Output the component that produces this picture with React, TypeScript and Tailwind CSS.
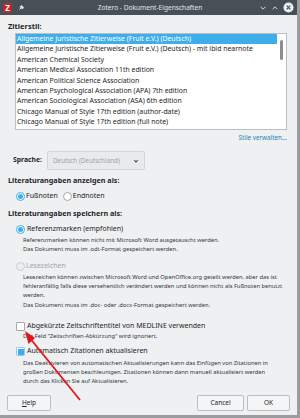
import React from 'react';

const styles = [
  'Allgemeine Juristische Zitierweise (Fruit e.V.) (Deutsch)',
  'Allgemeine Juristische Zitierweise (Fruit e.V.) (Deutsch) - mit ibid nearnote',
  'American Chemical Society',
  'American Medical Association 11th edition',
  'American Political Science Association',
  'American Psychological Association (APA) 7th edition',
  'American Sociological Association (ASA) 6th edition',
  'Chicago Manual of Style 17th edition (author-date)',
  'Chicago Manual of Style 17th edition (full note)',
];

function Radio({ checked, disabled }: { checked?: boolean; disabled?: boolean }) {
  return (
    <span
      className={
        'w-[9px] h-[9px] rounded-full border flex items-center justify-center shrink-0 ' +
        (disabled
          ? 'border-[#c9cbcd] bg-[#eceeef]'
          : checked
          ? 'border-[#3daee9] bg-white'
          : 'border-[#a5a7a9] bg-white')
      }
    >
      {checked && <span className="w-[5px] h-[5px] rounded-full bg-[#3daee9]" />}
    </span>
  );
}

function Checkbox({ checked }: { checked?: boolean }) {
  return (
    <span
      className={
        'w-[9px] h-[9px] rounded-[1px] border shrink-0 flex items-center justify-center ' +
        (checked ? 'border-[#93cdee] bg-white' : 'border-[#a5a7a9] bg-white')
      }
    >
      {checked && <span className="w-[6px] h-[6px] bg-[#3daee9]" />}
    </span>
  );
}

function Desc({ lines, className = '' }: { lines: string[]; className?: string }) {
  return (
    <div className={'pl-[15px] text-[5.75px] text-[#31363b] ' + className}>
      {lines.map((l) => (
        <div key={l} className="h-[9.3px] leading-[9.3px] whitespace-nowrap">
          {l}
        </div>
      ))}
    </div>
  );
}

export default function App() {
  return (
    <div
      className="relative w-[300px] h-[418px] bg-[#eff0f1] flex flex-col overflow-hidden border-r-[3px] border-b-[3px] border-[#9a9c9e]"
      style={{ fontFamily: '"Noto Sans", "DejaVu Sans", sans-serif' }}
    >
      {/* title bar */}
      <div className="h-[15px] bg-[#475057] flex items-center px-[3px] shrink-0 text-[#e3e5e7]">
        <span className="w-[9px] h-[10px] rounded-[2px] bg-[#b8282d] text-white text-[8px] font-bold leading-[10px] text-center">
          Z
        </span>
        <svg width="7" height="7" viewBox="0 0 10 10" className="ml-[6px]">
          <path d="M2 8 L5 5 M4 3 L7 6 M5 2 L8 5 L6 7 L3 4 Z" stroke="#dfe1e3" strokeWidth="1.4" fill="#dfe1e3" />
        </svg>
        <div className="flex-1 text-center text-[6.6px] pr-[4px] pl-[20px]">Zotero - Dokument-Eigenschaften</div>
        <svg width="8" height="8" viewBox="0 0 10 10" className="mr-[4px]">
          <path d="M2 3.5 L5 6.5 L8 3.5" stroke="#dfe1e3" strokeWidth="1.2" fill="none" />
        </svg>
        <svg width="8" height="8" viewBox="0 0 10 10" className="mr-[4px]">
          <path d="M2 6.5 L5 3.5 L8 6.5" stroke="#dfe1e3" strokeWidth="1.2" fill="none" />
        </svg>
        <svg width="11" height="11" viewBox="0 0 12 12">
          <circle cx="6" cy="6" r="5.5" fill="#eff0f1" />
          <path d="M4 4 L8 8 M8 4 L4 8" stroke="#475057" strokeWidth="1.4" />
        </svg>
      </div>

      <div className="flex-1 flex flex-col px-[8px] text-[#232629]">
        <div className="mt-[5px] h-[12px] leading-[12px] text-[7.5px] font-bold">Zitierstil:</div>

        <div className="mt-[1px] ml-[7px] w-[272px] h-[97px] bg-white border border-[#bcbebf] flex">
          <div className="flex-1 flex flex-col text-[6.9px]">
            {styles.map((s, i) => (
              <div
                key={s}
                className={
                  'h-[10.4px] leading-[10.4px] pl-[1px] whitespace-nowrap overflow-hidden ' +
                  (i === 0 ? 'bg-[#3daee9] text-white' : '')
                }
              >
                {s}
              </div>
            ))}
          </div>
          <div className="w-[9px] flex justify-center pt-[6px]">
            <div className="w-[3px] h-[20px] rounded-full bg-[#8b8d8f]" />
          </div>
        </div>

        <div className="mt-[2px] h-[12px] leading-[12px] text-right pr-[2px] text-[6.3px] text-[#2980b9]">
          Stile verwalten...
        </div>

        <div className="mt-[7px] h-[19px] flex items-center">
          <span className="ml-[5px] w-[34px] text-[6.8px] font-bold">Sprache:</span>
          <div className="w-[98px] h-[19px] rounded-[2px] border border-[#d3d5d7] bg-[#e8eaec] flex items-center pl-[5px] pr-[5px] text-[6.3px] text-[#a1a3a5]">
            <span className="flex-1">Deutsch (Deutschland)</span>
            <svg width="6" height="6" viewBox="0 0 10 10">
              <path d="M2 3.5 L5 6.5 L8 3.5" stroke="#4d5257" strokeWidth="1.8" fill="none" />
            </svg>
          </div>
        </div>

        <div className="mt-[4px] h-[12px] leading-[12px] text-[7.2px] font-bold">Literaturangaben anzeigen als:</div>

        <div className="mt-[4px] h-[12px] flex items-center pl-[8px] text-[7px]">
          <Radio checked />
          <span className="ml-[1px]">Fußnoten</span>
          <span className="ml-[5px]">
            <Radio />
          </span>
          <span className="ml-[1px]">Endnoten</span>
        </div>

        <div className="mt-[5px] h-[12px] leading-[12px] text-[7.2px] font-bold">Literaturangaben speichern als:</div>

        <div className="mt-[4px] h-[12px] flex items-center pl-[8px] text-[7px]">
          <Radio checked />
          <span className="ml-[2px]">Referenzmarken (empfohlen)</span>
        </div>
        <Desc
          className="mt-[1px]"
          lines={[
            'Referenzmarken können nicht mit Microsoft Word ausgetauscht werden.',
            'Das Dokument muss im .odt-Format gespeichert werden.',
          ]}
        />

        <div className="mt-[6px] h-[12px] flex items-center pl-[8px] text-[7px] text-[#a1a3a5]">
          <Radio disabled />
          <span className="ml-[1px]">Lesezeichen</span>
        </div>
        <Desc
          lines={[
            'Lesezeichen können zwischen Microsoft Word und OpenOffice.org geteilt werden, aber das ist',
            'fehleranfällig falls diese versehentlich verändert werden und können nicht als Fußnoten benutzt',
            'werden.',
          ]}
        />
        <Desc className="mt-[0.5px]" lines={['Das Dokument muss im .doc- oder .docx-Format gespeichert werden.']} />

        <div className="mt-[10px] h-[12px] flex items-center pl-[8px] text-[7px]">
          <Checkbox />
          <span className="ml-[2px]">Abgekürzte Zeitschriftentitel von MEDLINE verwenden</span>
        </div>
        <Desc lines={['Das Feld "Zeitschriften-Abkürzung" wird ignoriert.']} />

        <div className="mt-[4px] h-[12px] flex items-center pl-[8px] text-[7px]">
          <Checkbox checked />
          <span className="ml-[2px]">Automatisch Zitationen aktualisieren</span>
        </div>
        <Desc
          className="mt-[1px]"
          lines={[
            'Das Deaktivieren von automatischen Aktualisierungen kann das Einfügen von Zitationen in',
            'großen Dokumenten beschleunigen. Zitationen können dann manuell aktualisiert werden',
            'durch das Klicken Sie auf Aktualisieren.',
          ]}
        />

        <div className="mt-auto mb-[4px] flex items-center text-[6.5px]">
          <button className="ml-[-1px] w-[44px] h-[16px] rounded-[2px] border border-[#bcbebf] bg-[#f4f5f6]">
            <span className="underline">H</span>elp
          </button>
          <button className="ml-auto w-[47px] h-[16px] rounded-[2px] border border-[#bcbebf] bg-[#f4f5f6]">
            Cancel
          </button>
          <button className="ml-[3px] mr-[-1px] w-[43px] h-[16px] rounded-[2px] border border-[#bcbebf] bg-[#f4f5f6]">
            OK
          </button>
        </div>
      </div>

      {/* annotation arrow */}
      <svg className="absolute left-0 top-0 pointer-events-none" width="300" height="418">
        <line x1="80" y1="400" x2="29" y2="337" stroke="#e3151b" strokeWidth="1.8" />
        <polygon points="25,331 28.5,344 35,338" fill="#e3151b" />
      </svg>
    </div>
  );
}
